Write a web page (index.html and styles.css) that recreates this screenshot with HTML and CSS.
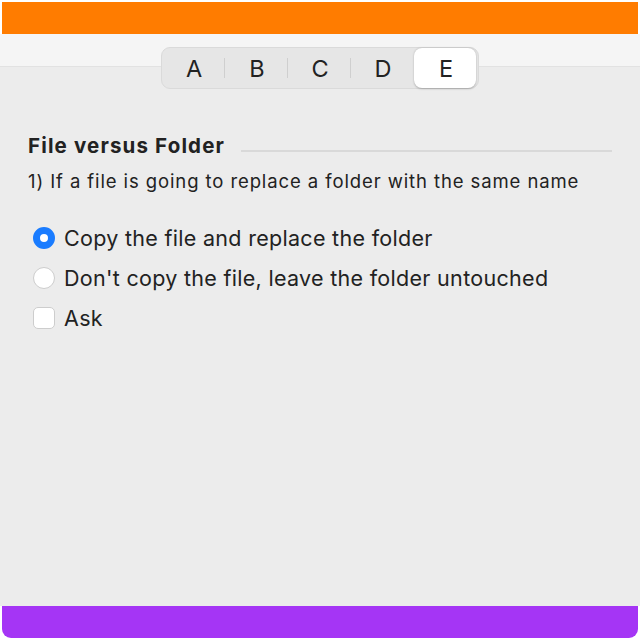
FILE: index.html
```html
<!DOCTYPE html>
<html>
<head>
<meta charset="utf-8">
<link rel="stylesheet" href="styles.css">
</head>
<body>
<div class="window">
  <div class="topbar"></div>
  <div class="toolbar">
    <div class="segmented">
      <div class="seg">A</div>
      <div class="sep"></div>
      <div class="seg">B</div>
      <div class="sep"></div>
      <div class="seg">C</div>
      <div class="sep"></div>
      <div class="seg">D</div>
      <div class="seg selected">E</div>
    </div>
  </div>
  <div class="content">
    <div class="heading">
      <span class="heading-text">File versus Folder</span>
      <span class="heading-line"></span>
    </div>
    <div class="desc">1) If a file is going to replace a folder with the same name</div>
    <div class="options">
      <label class="option"><span class="radio checked"></span><span>Copy the file and replace the folder</span></label>
      <label class="option"><span class="radio"></span><span>Don't copy the file, leave the folder untouched</span></label>
      <label class="option"><span class="checkbox"></span><span>Ask</span></label>
    </div>
  </div>
  <div class="bottombar"></div>
</div>
</body>
</html>
```
FILE: styles.css
```css
html, body {
  margin: 0;
  padding: 0;
  background: #ffffff;
}
.window {
  width: 640px;
  height: 640px;
  display: flex;
  flex-direction: column;
  font-family: Inter, "Liberation Sans", sans-serif;
  color: #222222;
}
.topbar {
  height: 32px;
  margin: 2px 2px 0 2px;
  background: #ff7c00;
  flex: none;
}
.toolbar {
  height: 32px;
  background: #f5f5f5;
  border-bottom: 1px solid #e2e2e2;
  flex: none;
  position: relative;
}
.segmented {
  position: absolute;
  top: 13px;
  left: 161px;
  height: 40px;
  width: 316px;
  box-sizing: content-box;
  background: #e6e6e6;
  border: 1px solid #dadada;
  border-radius: 9px;
  display: flex;
  align-items: center;
}
.seg {
  width: 62px;
  height: 40px;
  display: flex;
  align-items: center;
  justify-content: center;
  font-size: 23.5px;
  color: #222;
  padding-left: 2px;
  box-sizing: border-box;
}
.sep {
  width: 1px;
  height: 20px;
  background: #cfcfcf;
}
.seg.selected {
  background: #ffffff;
  border-radius: 8px;
  width: 62px;
  margin-left: 1px;
  box-shadow: 0 0.5px 2px rgba(0,0,0,0.25);
}
.content {
  flex: 1;
  background: #ececec;
  padding: 67px 28px 0 28px;
}
.heading {
  display: flex;
  align-items: center;
  gap: 16px;
}
.heading-text {
  font-weight: 700;
  font-size: 20.5px;
  line-height: 24px;
  letter-spacing: 1.15px;
}
.heading-line {
  flex: 1;
  height: 2px;
  background: #d9d9d9;
  margin-top: 10px;
}
.desc {
  font-size: 18.5px;
  margin-top: 12px;
  line-height: 22px;
  letter-spacing: 0.9px;
}
.options {
  margin-top: 34px;
  display: flex;
  flex-direction: column;
  gap: 16px;
}
.option {
  display: flex;
  align-items: center;
  gap: 9px;
  font-size: 21.5px;
  line-height: 24px;
  letter-spacing: 0.3px;
  padding-left: 5px;
}
.radio {
  width: 22px;
  height: 22px;
  border-radius: 50%;
  background: #ffffff;
  border: 1px solid #cdcdcd;
  box-sizing: border-box;
  flex: none;
}
.radio.checked {
  border: 7px solid #1a7cff;
  background: #ffffff;
}
.checkbox {
  width: 22px;
  height: 22px;
  border-radius: 5px;
  background: #ffffff;
  border: 1px solid #cdcdcd;
  box-sizing: border-box;
  flex: none;
}
.bottombar {
  height: 32px;
  margin: 0 2px 2px 2px;
  background: #a535f5;
  border-radius: 0 0 9px 9px;
  flex: none;
}
```
